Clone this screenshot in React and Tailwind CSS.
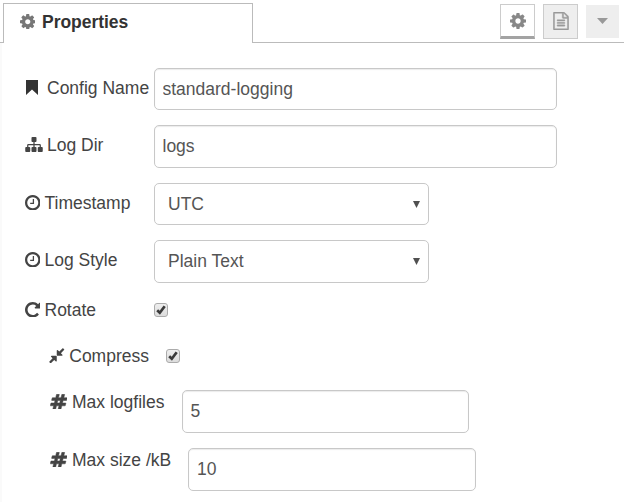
import React from "react";

const COG =
  "M1152 896q0-106-75-181t-181-75-181 75-75 181 75 181 181 75 181-75 75-181zm512-109v222q0 12-8 23t-20 13l-185 28q-19 54-39 91 35 50 107 138 10 12 10 25t-9 23q-27 37-99 108t-94 71q-12 0-26-9l-138-108q-44 23-91 38-16 136-29 186-7 28-36 28h-222q-14 0-24.5-8.5t-11.5-21.5l-28-184q-49-16-90-37l-141 107q-10 9-25 9-14 0-25-11-126-114-165-168-7-10-7-23 0-12 8-23 15-21 51-66.5t54-70.5q-27-50-41-99l-183-27q-13-2-21-12.5t-8-23.5v-222q0-12 8-23t19-13l186-28q14-46 39-92-40-57-107-138-10-12-10-24 0-10 9-23 26-36 98.5-107.5t94.5-71.5q13 0 26 10l138 107q44-23 91-38 16-136 29-186 7-28 36-28h222q14 0 24.5 8.5t11.5 21.5l28 184q49 16 90 37l142-107q9-9 24-9 13 0 25 10 129 119 165 170 7 8 7 22 0 12-8 23-15 21-51 66.5t-54 70.5q26 50 41 98l183 28q13 2 21 12.5t8 23.5z";
const CLOCK =
  "M1024 544v448q0 14-9 23t-23 9h-320q-14 0-23-9t-9-23v-64q0-14 9-23t23-9h224v-352q0-14 9-23t23-9h64q14 0 23 9t9 23zm416 352q0-148-73-273t-198-198-273-73-273 73-198 198-73 273 73 273 198 198 273 73 273-73 198-198 73-273zm224 0q0 209-103 385.5t-279.5 279.5-385.5 103-385.5-103-279.5-279.5-103-385.5 103-385.5 279.5-279.5 385.5-103 385.5 103 279.5 279.5 103 385.5z";
const REPEAT =
  "M1664 256v448q0 26-19 45t-45 19h-448q-42 0-59-40-17-39 14-69l138-138q-148-137-349-137-104 0-198.5 40.5t-163.5 109.5-109.5 163.5-40.5 198.5 40.5 198.5 109.5 163.5 163.5 109.5 198.5 40.5q119 0 225-52t179-147q7-10 23-12 15 0 25 9l137 138q9 8 9.5 20.5t-7.5 22.5q-109 132-264 204.5t-327 72.5q-156 0-298-61t-245-164-164-245-61-298 61-298 164-245 245-164 298-61q147 0 284.5 55.5t244.5 156.5l130-129q29-31 70-14 39 17 39 59z";
const SITEMAP =
  "M1792 1248v320q0 40-28 68t-68 28h-320q-40 0-68-28t-28-68v-320q0-40 28-68t68-28h96v-192h-512v192h96q40 0 68 28t28 68v320q0 40-28 68t-68 28h-320q-40 0-68-28t-28-68v-320q0-40 28-68t68-28h96v-192h-512v192h96q40 0 68 28t28 68v320q0 40-28 68t-68 28h-320q-40 0-68-28t-28-68v-320q0-40 28-68t68-28h96v-192q0-52 38-90t90-38h512v-192h-96q-40 0-68-28t-28-68v-320q0-40 28-68t68-28h320q40 0 68 28t28 68v320q0 40-28 68t-68 28h-96v192h512q52 0 90 38t38 90v192h96q40 0 68 28t28 68z";
const HASH =
  "M991 1024l64-256h-254l-64 256h254zm768-504l-56 224q-7 24-31 24h-327l-64 256h311q15 0 25 12 10 14 6 28l-56 224q-5 24-31 24h-327l-81 328q-7 24-31 24h-224q-16 0-26-12-9-12-6-28l78-312h-254l-81 328q-7 24-31 24h-225q-15 0-25-12-9-12-6-28l78-312h-311q-15 0-25-12-9-12-6-28l56-224q7-24 31-24h327l64-256h-311q-15 0-25-12-10-14-6-28l56-224q5-24 31-24h327l81-328q7-24 32-24h224q15 0 25 12 9 12 6 28l-78 312h254l81-328q7-24 32-24h224q15 0 25 12 9 12 6 28l-78 312h311q15 0 25 12 9 12 6 28z";
const COMPRESS =
  "M896 960v448q0 26-19 45t-45 19-45-19l-144-144-332 332q-10 10-23 10t-23-10l-114-114q-10-10-10-23t10-23l332-332-144-144q-19-19-19-45t19-45 45-19h448q26 0 45 19t19 45zm755-672q0 13-10 23l-332 332 144 144q19 19 19 45t-19 45-45 19h-448q-26 0-45-19t-19-45v-448q0-26 19-45t45-19 45 19l144 144 332-332q10-10 23-10t23 10l114 114q10 10 10 23z";
const FILE =
  "M1596 380q28 28 48 76t20 88v1152q0 40-28 68t-68 28h-1344q-40 0-68-28t-28-68v-1600q0-40 28-68t68-28h896q40 0 88 20t76 48zm-444-244v376h376q-10-29-22-41l-313-313q-12-12-41-22zm384 1528v-1024h-416q-40 0-68-28t-28-68v-416h-768v1536h1280zm-1024-864q0-14 9-23t23-9h704q14 0 23 9t9 23v64q0 14-9 23t-23 9h-704q-14 0-23-9t-9-23v-64zm736 224q14 0 23 9t9 23v64q0 14-9 23t-23 9h-704q-14 0-23-9t-9-23v-64q0-14 9-23t23-9h704zm0 256q14 0 23 9t9 23v64q0 14-9 23t-23 9h-704q-14 0-23-9t-9-23v-64q0-14 9-23t23-9h704z";
const BOOKMARK = "M0 0h12v15l-6-5.4L0 15z";

function Icon({ d, box = "128 128 1536 1536", className }) {
  return (
    <svg viewBox={box} className={`shrink-0 ${className}`} fill="currentColor" aria-hidden="true">
      <path d={d} />
    </svg>
  );
}

function Label({ icon, box, iconClass, className, children }) {
  return (
    <div className={`flex h-[40px] shrink-0 items-center whitespace-nowrap ${className}`}>
      <Icon d={icon} box={box} className={`mb-px ${iconClass}`} />
      <span>{children}</span>
    </div>
  );
}

function Field({ value, className }) {
  return (
    <input
      type="text"
      readOnly
      value={value}
      className={`rounded-[5px] border border-[#c8c8c8] bg-white px-[7.5px] text-[#555] shadow-[inset_0_1px_1px_rgba(0,0,0,0.08)] outline-none ${className}`}
    />
  );
}

function Picker({ value, className }) {
  return (
    <div className={`flex w-[275px] items-center justify-between rounded-[5px] border border-[#c8c8c8] bg-white pr-2 pl-[13px] text-[#555] ${className}`}>
      <span>{value}</span>
      <svg viewBox="0 0 7 7" className="h-[7px] w-[7px]" fill="#505050" aria-hidden="true">
        <path d="M0 0h7L3.5 7z" />
      </svg>
    </div>
  );
}

function Check() {
  return (
    <div className="flex h-[14px] w-[14px] items-center justify-center rounded-[3px] border border-[#ababab] bg-linear-to-b from-[#eeeeee] to-[#dcdcdc]">
      <svg viewBox="0 0 10 10" className="h-[10px] w-[10px]" fill="none" aria-hidden="true">
        <path d="M1.2 5.2l2.6 2.5L8.7 1.3" stroke="#3a3a3a" strokeWidth="2.7" />
      </svg>
    </div>
  );
}

export default function App() {
  return (
    <div className="flex h-[502px] w-[624px] flex-col overflow-hidden bg-white font-['Liberation_Sans',Arial,sans-serif] text-[17.5px] leading-5 text-[#444]">
      <header className="flex h-[43px] shrink-0">
        <div className="w-[3px] border-b border-[#bbb]" />
        <div className="flex w-[250px] items-start pt-[3px]">
          <div className="flex h-10 w-full items-center border-x border-t border-[#bbb] pb-[3px] pl-[15.5px]">
            <Icon d={COG} className="mr-[7px] mb-px h-[15.5px] w-[15.5px] text-[#777]" />
            <span className="text-[17.5px] font-bold tracking-[-0.03px] text-[#333]">Properties</span>
          </div>
        </div>
        <div className="flex flex-1 items-start justify-end gap-2 border-b border-[#bbb] pt-1 pr-[5px]">
          <div className="flex h-[35px] w-[35px] items-center justify-center border border-b-[3px] border-[#ccc] border-b-[#a3a3a3]">
            <Icon d={COG} className="h-4 w-4 text-[#888]" />
          </div>
          <div className="flex h-[35px] w-[35px] items-center justify-center border border-[#ccc] bg-[#eee] pb-px">
            <Icon d={FILE} box="128 0 1536 1792" className="h-[18px] w-4 stroke-[#999] stroke-[40] text-[#999]" />
          </div>
          <div className="mt-px flex h-[33px] w-[33px] items-center justify-center bg-[#eee] pb-px">
            <svg viewBox="0 0 11 6" className="h-[6px] w-[11px]" fill="#999" aria-hidden="true">
              <path d="M0 0h11L5.5 6z" />
            </svg>
          </div>
        </div>
      </header>

      <main className="flex flex-1 flex-col border-l-2 border-[#fafafa] pt-[25px]">
        <div className="flex h-[57px] items-start">
          <Label icon={BOOKMARK} box="0 0 12 15" iconClass="ml-[2px] mr-[9px] h-[15px] w-3 text-[#333]" className="w-[152px] pl-[22px]">
            Config Name
          </Label>
          <Field value="standard-logging" className="h-[42px] w-[403px]" />
        </div>
        <div className="flex h-[58px] items-start">
          <Label icon={SITEMAP} box="0 128 1792 1536" iconClass="mr-[4px] h-[15px] w-[18px]" className="w-[152px] pl-[22.5px]">
            <span className="pl-[0.5px]">Log Dir</span>
          </Label>
          <Field value="logs" className="h-[43px] w-[403px]" />
        </div>
        <div className="flex h-[57px] items-start">
          <Label icon={CLOCK} iconClass="mr-[4.5px] h-[15.5px] w-[15.5px]" className="w-[152px] pl-[22.5px]">
            Timestamp
          </Label>
          <Picker value="UTC" className="h-[42px]" />
        </div>
        <div className="flex h-[50px] items-start">
          <Label icon={CLOCK} iconClass="mr-[4.5px] h-[15.5px] w-[15.5px]" className="w-[152px] pl-[22.5px]">
            Log Style
          </Label>
          <Picker value="Plain Text" className="h-[43px] pb-px" />
        </div>
        <div className="flex h-[46px] items-start">
          <Label icon={REPEAT} iconClass="mr-[4.5px] h-[15.5px] w-[15.5px]" className="w-[152px] pl-[22.5px]">
            Rotate
          </Label>
          <div className="pt-[13px]">
            <Check />
          </div>
        </div>
        <div className="flex h-[46px] items-start">
          <Label icon={COMPRESS} iconClass="mr-[4.5px] h-[15.5px] w-[15.5px]" className="w-[164px] pl-[47.25px]">
            Compress
          </Label>
          <div className="pt-[13px]">
            <Check />
          </div>
        </div>
        <div className="flex h-[58px] items-start">
          <Label icon={HASH} box="0 128 1792 1536" iconClass="mr-[5px] h-[15.5px] w-[17.5px] stroke-[#444] stroke-[50]" className="w-[180px] pl-[47.5px]">
            Max logfiles
          </Label>
          <Field value="5" className="mt-[8px] h-[43px] w-[287px]" />
        </div>
        <div className="flex items-start">
          <Label icon={HASH} box="0 128 1792 1536" iconClass="mr-[5px] h-[15.5px] w-[17.5px] stroke-[#444] stroke-[50]" className="w-[186px] pl-[47.5px]">
            Max size /kB
          </Label>
          <Field value="10" className="mt-[8px] h-[43px] w-[288px] pl-2" />
        </div>
      </main>
    </div>
  );
}
